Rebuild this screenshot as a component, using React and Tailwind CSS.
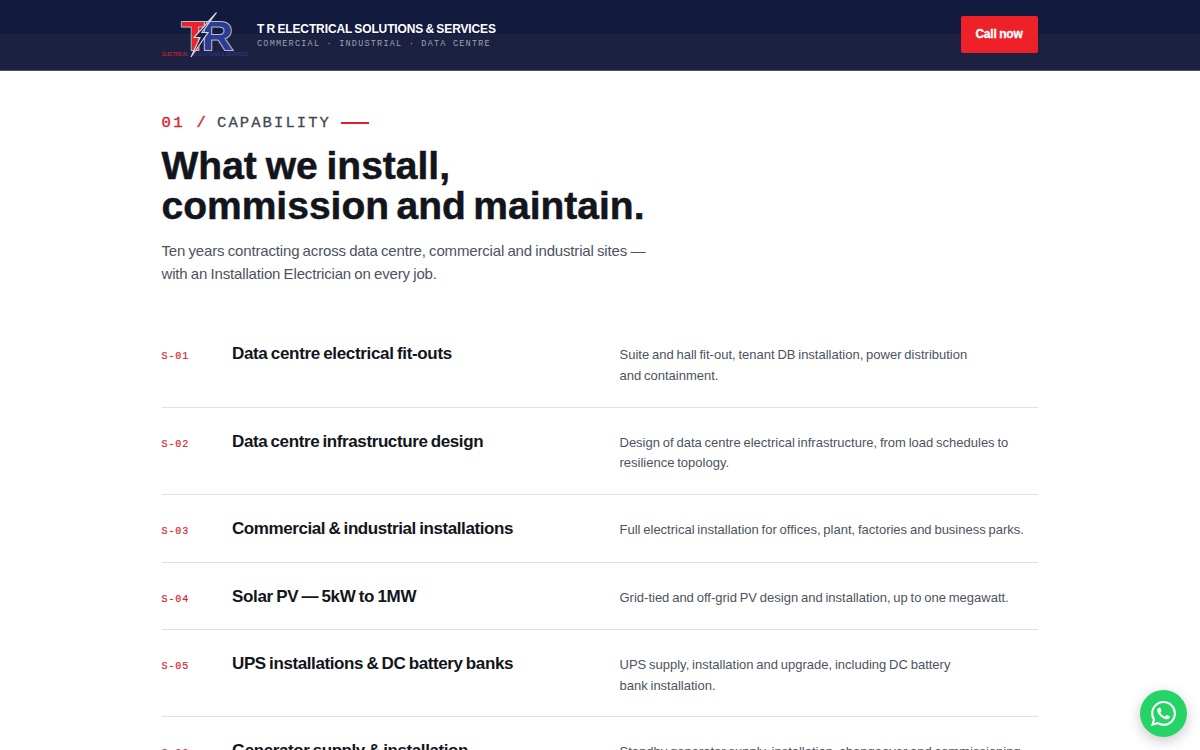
const SERVICES = [
    {
        code: 'S-01',
        title: 'Data centre electrical fit-outs',
        lines: ['Suite and hall fit-out, tenant DB installation, power distribution', 'and containment.'],
        height: 'h-[87.4px]',
        titleTracking: 'tracking-[-0.34px]',
    },
    {
        code: 'S-02',
        title: 'Data centre infrastructure design',
        lines: ['Design of data centre electrical infrastructure, from load schedules to', 'resilience topology.'],
        height: 'h-[87.4px]',
        titleTracking: 'tracking-[-0.4px]',
    },
    {
        code: 'S-03',
        title: 'Commercial & industrial installations',
        lines: ['Full electrical installation for offices, plant, factories and business parks.'],
        height: 'h-[67.5px]',
        titleTracking: 'tracking-[-0.42px]',
    },
    {
        code: 'S-04',
        title: 'Solar PV — 5kW to 1MW',
        lines: ['Grid-tied and off-grid PV design and installation, up to one megawatt.'],
        height: 'h-[67.5px]',
        titleTracking: 'tracking-[-0.35px]',
    },
    {
        code: 'S-05',
        title: 'UPS installations & DC battery banks',
        lines: ['UPS supply, installation and upgrade, including DC battery', 'bank installation.'],
        height: 'h-[87.4px]',
        titleTracking: 'tracking-[-0.4px]',
    },
    {
        code: 'S-06',
        title: 'Generator supply & installation',
        lines: ['Standby generator supply, installation, changeover and commissioning.'],
        height: 'h-[67.5px]',
        titleTracking: 'tracking-[-0.43px]',
    },
];

function Logo() {
    return (
        <svg width="88" height="50" viewBox="0 0 88 50" className="shrink-0 overflow-visible">
            <g fontFamily="Liberation Sans, sans-serif" fontWeight="700" fontSize="41" strokeLinejoin="miter" paintOrder="stroke">
                <text x="19.5" y="39.5" textLength="27" lengthAdjust="spacingAndGlyphs" fill="#ee2227" stroke="#b9bdcc" strokeWidth="2">T</text>
                <text x="40" y="39.5" textLength="31" lengthAdjust="spacingAndGlyphs" fill="#2c3b94" stroke="#b9bdcc" strokeWidth="2">R</text>
            </g>
            <path d="M54.5 2.5 L32 27.5 L38 27.5 L29 47 L46 22.5 L40 22.5 Z" fill="#151c3f" stroke="#d2d4dc" strokeWidth="1.2" />
            <g fontFamily="Liberation Sans, sans-serif" fontSize="6" fontStyle="italic" fontWeight="700">
                <text x="0" y="46.4" textLength="26" lengthAdjust="spacingAndGlyphs" fill="#c01f33">ELECTRICAL</text>
                <text x="32.5" y="46.4" textLength="53.5" lengthAdjust="spacingAndGlyphs" fill="#2a3482">SOLUTIONS &amp; SERVICES</text>
            </g>
        </svg>
    );
}

function Header() {
    return (
        <header className="h-[71px] border-b border-[#4a4e69] bg-linear-to-b from-[#121a3d] from-[34px] to-[#1c2142] to-[34px]">
            <div className="mx-auto flex h-full w-[877px] items-center justify-between pr-px">
                <div className="flex items-center gap-[7.5px]">
                    <Logo />
                    <div className="pt-[3px]">
                        <div className="text-[12px] leading-[15px] font-bold tracking-[-0.12px] [word-spacing:-0.9px] whitespace-nowrap text-white">T R ELECTRICAL SOLUTIONS &amp; SERVICES</div>
                        <div className="font-['Liberation_Mono',monospace] text-[8.5px] leading-[15px] tracking-[1.22px] whitespace-nowrap text-[#9da1b3]">COMMERCIAL · INDUSTRIAL · DATA CENTRE</div>
                    </div>
                </div>
                <button className="mb-px h-[37px] w-[77px] rounded-[2px] bg-[#ee2128] pb-px text-[12px] font-bold tracking-[-0.2px] [word-spacing:-0.5px] text-white [-webkit-text-stroke:0.3px_#fff]">Call now</button>
            </div>
        </header>
    );
}

function ServiceRow({ service }) {
    return (
        <li className={`flex items-baseline border-b border-[#dfe1e4] pt-[23px] ${service.height}`}>
            <span className="w-[70.5px] shrink-0 font-['Liberation_Mono',monospace] text-[10px] tracking-[0.9px] text-[#d8232f] [-webkit-text-stroke:0.2px_#d8232f]">{service.code}</span>
            <h3 className={`w-[387.5px] shrink-0 text-[17px] leading-[22px] font-bold [word-spacing:-1px] whitespace-nowrap text-[#12161c] ${service.titleTracking}`}>{service.title}</h3>
            <p className="text-[13px] leading-[20.8px] [word-spacing:-0.8px] whitespace-nowrap text-[#4c535f]">
                {service.lines.map((line) => (
                    <span key={line} className="block">{line}</span>
                ))}
            </p>
        </li>
    );
}

function WhatsAppButton() {
    return (
        <a className="fixed right-[13.5px] bottom-[13.5px] flex size-[47px] items-center justify-center rounded-full bg-[#25d366] shadow-[0_4px_14px_rgba(0,0,0,0.22)]">
            <svg width="25" height="25" viewBox="0 0 24 24" fill="#fff">
                <path d="M17.472 14.382c-.297-.149-1.758-.867-2.03-.967-.273-.099-.471-.148-.67.15-.197.297-.767.966-.94 1.164-.173.199-.347.223-.644.075-.297-.15-1.255-.463-2.39-1.475-.883-.788-1.48-1.761-1.653-2.059-.173-.297-.018-.458.13-.606.134-.133.298-.347.446-.52.149-.174.198-.298.298-.497.099-.198.05-.371-.025-.52-.075-.149-.669-1.612-.916-2.207-.242-.579-.487-.5-.669-.51-.173-.008-.371-.01-.57-.01-.198 0-.52.074-.792.372-.272.297-1.04 1.016-1.04 2.479 0 1.462 1.065 2.875 1.213 3.074.149.198 2.096 3.2 5.077 4.487.709.306 1.262.489 1.694.625.712.227 1.36.195 1.871.118.571-.085 1.758-.719 2.006-1.413.248-.694.248-1.289.173-1.413-.074-.124-.272-.198-.57-.347m-5.421 7.403h-.004a9.87 9.87 0 01-5.031-1.378l-.361-.214-3.741.982.998-3.648-.235-.374a9.86 9.86 0 01-1.51-5.26c.001-5.45 4.436-9.884 9.888-9.884 2.64 0 5.122 1.03 6.988 2.898a9.825 9.825 0 012.893 6.994c-.003 5.45-4.437 9.884-9.885 9.884m8.413-18.297A11.815 11.815 0 0012.05 0C5.495 0 .16 5.335.157 11.892c0 2.096.547 4.142 1.588 5.945L.057 24l6.305-1.654a11.882 11.882 0 005.683 1.448h.005c6.554 0 11.89-5.335 11.893-11.893a11.821 11.821 0 00-3.48-8.413z" />
            </svg>
        </a>
    );
}

export default function App() {
    return (
        <div className="h-[750px] overflow-hidden bg-white font-['Liberation_Sans',sans-serif]">
            <Header />
            <main className="mx-auto w-[877px] pt-[41px] pr-px">
                <div className="flex items-center font-['Liberation_Mono',monospace] text-[15.5px] leading-[22px] whitespace-nowrap">
                    <span className="w-[55.5px] tracking-[2.4px] text-[#d8232f] [-webkit-text-stroke:0.4px_#d8232f]">01 /</span>
                    <span className="w-[124px] tracking-[2.1px] text-[#414854] [-webkit-text-stroke:0.3px_#414854]">CAPABILITY</span>
                    <span className="h-[2px] w-[28px] bg-[#d8232f]" />
                </div>
                <h2 className="mt-[12px] text-[39px] leading-[40px] font-bold whitespace-nowrap text-[#12161c] [-webkit-text-stroke:0.5px_#12161c]">
                    <span className="block tracking-[0px] [word-spacing:-2px]">What we install,</span>
                    <span className="block tracking-[0px] [word-spacing:-3.4px]">commission and maintain.</span>
                </h2>
                <p className="mt-[13px] text-[15px] leading-[23.3px] tracking-[-0.16px] [word-spacing:-0.7px] whitespace-nowrap text-[#4c535f]">
                    <span className="block">Ten years contracting across data centre, commercial and industrial sites —</span>
                    <span className="block">with an Installation Electrician on every job.</span>
                </p>
                <ul className="mt-[34.7px]">
                    {SERVICES.map((service) => (
                        <ServiceRow key={service.code} service={service} />
                    ))}
                </ul>
            </main>
            <WhatsAppButton />
        </div>
    );
}
